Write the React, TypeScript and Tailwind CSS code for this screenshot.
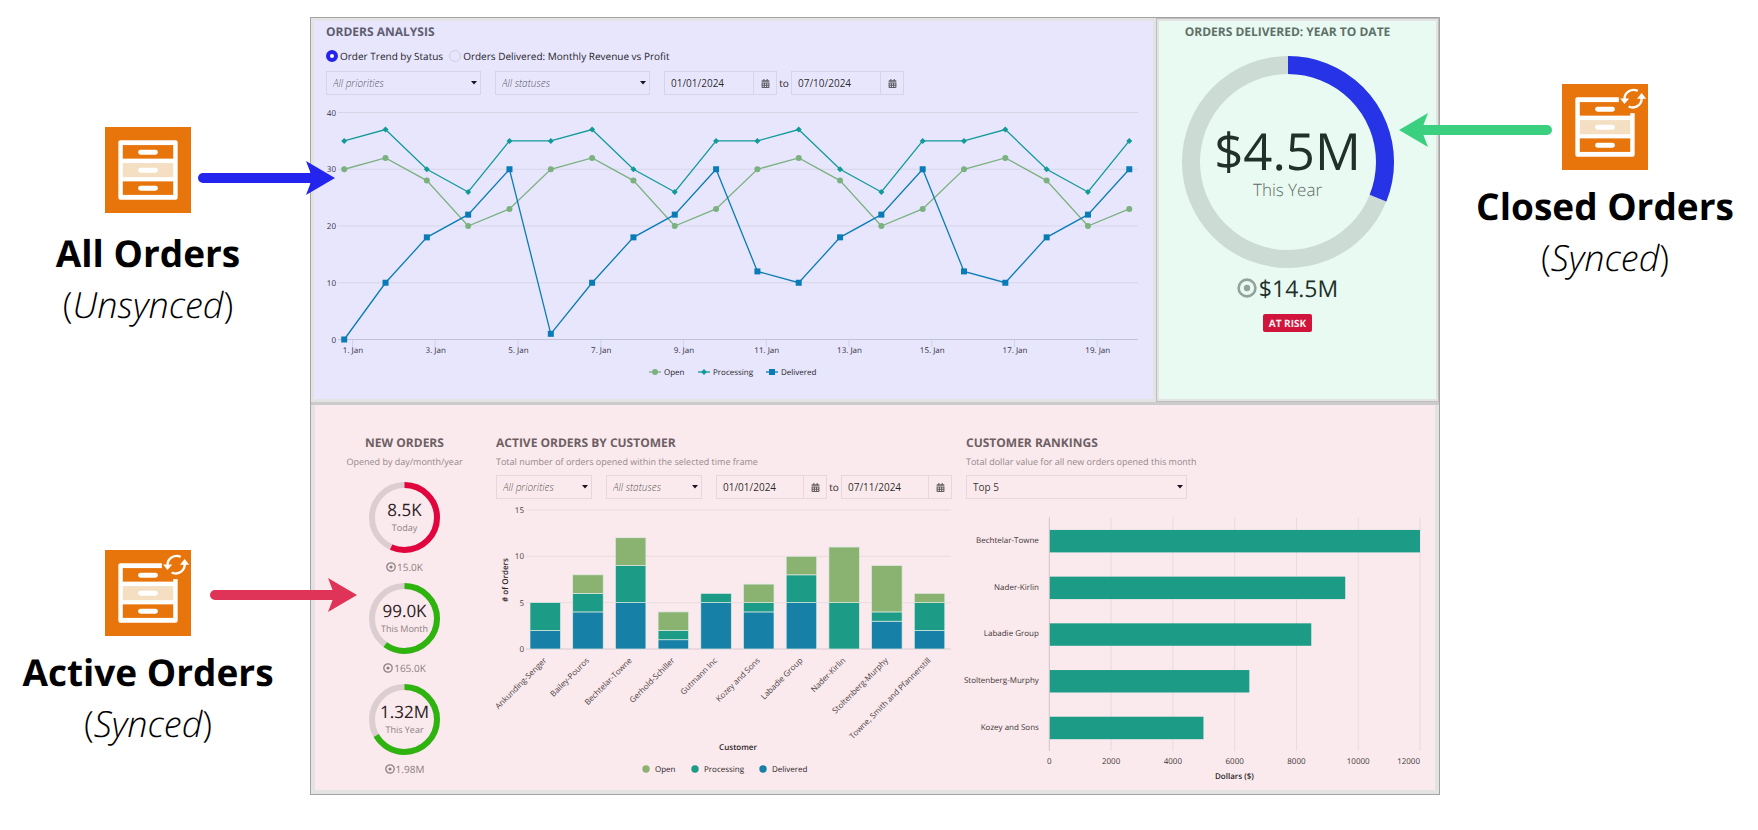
import { useId, useState } from 'react'
import type { ReactNode } from 'react'
import { FaCalendarAlt } from 'react-icons/fa'

const OPEN = '#7ab17f'
const PROCESSING = '#119a97'
const DELIVERED = '#0a7cb5'

const trend = {
  open: [30, 32, 28, 20, 23, 30, 32, 28, 20, 23, 30, 32, 28, 20, 23, 30, 32, 28, 20, 23],
  processing: [35, 37, 30, 26, 35, 35, 37, 30, 26, 35, 35, 37, 30, 26, 35, 35, 37, 30, 26, 35],
  delivered: [0, 10, 18, 22, 30, 1, 10, 18, 22, 30, 12, 10, 18, 22, 30, 12, 10, 18, 22, 30],
}

const customers = [
  { name: 'Ankunding-Senger', delivered: 2, processing: 3, open: 0 },
  { name: 'Bailey-Pouros', delivered: 4, processing: 2, open: 2 },
  { name: 'Bechtelar-Towne', delivered: 5, processing: 4, open: 3 },
  { name: 'Gerhold-Schiller', delivered: 1, processing: 1, open: 2 },
  { name: 'Gutmann Inc', delivered: 5, processing: 1, open: 0 },
  { name: 'Kozey and Sons', delivered: 4, processing: 1, open: 2 },
  { name: 'Labadie Group', delivered: 5, processing: 3, open: 2 },
  { name: 'Nader-Kirlin', delivered: 0, processing: 5, open: 6 },
  { name: 'Stoltenberg-Murphy', delivered: 3, processing: 1, open: 5 },
  { name: 'Towne, Smith and Pfannerstill', delivered: 2, processing: 3, open: 1 },
]

const rankings = [
  { name: 'Bechtelar-Towne', value: 12000 },
  { name: 'Nader-Kirlin', value: 9580 },
  { name: 'Labadie Group', value: 8480 },
  { name: 'Stoltenberg-Murphy', value: 6475 },
  { name: 'Kozey and Sons', value: 4990 },
]

const goals = [
  { value: '8.5K', label: 'Today', target: '15.0K', ratio: 8.5 / 15, color: '#e2043c' },
  { value: '99.0K', label: 'This Month', target: '165.0K', ratio: 99 / 165, color: '#2fb40f' },
  { value: '1.32M', label: 'This Year', target: '1.98M', ratio: 1.32 / 1.98, color: '#2fb40f' },
]

function CabinetIcon({ synced = false }: { synced?: boolean }) {
  return (
    <svg viewBox="0 0 87 87" className="size-[86px]" aria-hidden="true">
      <rect width="87" height="87" fill="#e8750b" />
      <rect x="13.5" y="13.5" width="60" height="60" rx="2" fill="#fff" />
      <rect x="18" y="18.3" width="51" height="13.7" fill="#e8750b" />
      <rect x="18" y="36.5" width="51" height="14.3" fill="#f4dfc3" />
      <rect x="18" y="55" width="51" height="13.7" fill="#e8750b" />
      <rect x="33.5" y="23" width="20" height="5" rx="2.5" fill="#fff" />
      <rect x="33.5" y="41.2" width="20" height="5" rx="2.5" fill="#fff" />
      <rect x="33.5" y="59.5" width="20" height="5" rx="2.5" fill="#fff" />
      {synced && (
        <>
          <rect x="57.5" y="0" width="29.5" height="29.5" fill="#e8750b" />
          <g fill="none" stroke="#fff" strokeWidth="2.4">
            <path d="M76.6 7A9.2 9.2 0 0 0 63.2 15.2" />
            <path d="M67.4 22.8A9.2 9.2 0 0 0 80.6 14" />
          </g>
          <path d="M58.8 14.6h9.2l-4.8 5.6zM75.8 15l4.8-5.8 4.6 5.8z" fill="#fff" />
        </>
      )}
    </svg>
  )
}

function Arrow({ length, color, className }: { length: number; color: string; className: string }) {
  return (
    <svg width={length} height="34" viewBox={`0 0 ${length} 34`} className={className} aria-hidden="true">
      <path d={`M5 17H${length - 20}`} stroke={color} strokeWidth="10" strokeLinecap="round" />
      <path d={`M${length} 17L${length - 29} 0L${length - 22.5} 17L${length - 29} 34Z`} fill={color} />
    </svg>
  )
}

function Source({ name, state, children }: { name: string; state: string; children: ReactNode }) {
  return (
    <div className="flex flex-col items-center gap-2.5 text-center whitespace-nowrap text-black">
      {children}
      <div className="leading-[52px]">
        <h2 className="text-[37px] font-bold">{name}</h2>
        <p className="text-[36px] font-light">
          (<em>{state}</em>)
        </p>
      </div>
    </div>
  )
}

function Select({ label, options, muted = false, className }: { label: string; options: string[]; muted?: boolean; className: string }) {
  return (
    <div className={`relative h-6 ${className}`}>
      <select
        aria-label={label}
        className={
          muted
            ? 'block h-full w-full appearance-none border border-black/8 pl-1.5 text-[10px] font-light italic text-black/70'
            : 'block h-full w-full appearance-none border border-black/8 pl-1.5 text-[10px] text-black/80'
        }
      >
        {options.map((o) => (
          <option key={o}>{o}</option>
        ))}
      </select>
      <svg viewBox="0 0 6 4" className="pointer-events-none absolute top-2.5 right-1 h-1 w-1.5" aria-hidden="true">
        <path d="M0 0h6L3 3.6z" fill="#1c1420" />
      </svg>
    </div>
  )
}

function DateField({ label, value, className }: { label: string; value: string; className: string }) {
  return (
    <div className={`flex h-6 border border-black/8 ${className}`}>
      <input
        type="text"
        aria-label={label}
        defaultValue={value}
        className="w-0 flex-1 border-r border-black/8 pl-1.5 text-[10px] text-black/85"
      />
      <button type="button" aria-label={`Pick ${label}`} className="flex w-[22px] items-center justify-center text-black/60">
        <FaCalendarAlt className="size-[9px]" />
      </button>
    </div>
  )
}

function TargetIcon({ className }: { className: string }) {
  return (
    <svg viewBox="0 0 20 20" className={className} aria-hidden="true">
      <circle cx="10" cy="10" r="8.4" fill="none" stroke="currentColor" strokeWidth="2.6" />
      <circle cx="10" cy="10" r="3.2" fill="currentColor" />
    </svg>
  )
}

function Ring({ size, width, ratio, color, track, className }: { size: number; width: number; ratio: number; color: string; track: string; className: string }) {
  const r = (size - width) / 2
  const len = 2 * Math.PI * r
  return (
    <svg viewBox={`0 0 ${size} ${size}`} className={className} aria-hidden="true">
      <g fill="none" strokeWidth={width} transform={`rotate(-90 ${size / 2} ${size / 2})`}>
        <circle cx={size / 2} cy={size / 2} r={r} stroke={track} />
        <circle cx={size / 2} cy={size / 2} r={r} stroke={color} strokeDasharray={`${len * ratio} ${len}`} />
      </g>
    </svg>
  )
}

function Marker({ kind, x, y }: { kind: string; x: number; y: number }) {
  if (kind === 'open') return <circle cx={x} cy={y} r="3" fill={OPEN} />
  if (kind === 'processing') return <path d={`M${x - 3} ${y}l3 -3l3 3l-3 3z`} fill={PROCESSING} />
  return <rect x={x - 3} y={y - 3} width="6" height="6" fill={DELIVERED} />
}

function TrendChart() {
  const px = (i: number) => 17.2 + i * 41.32
  const py = (v: number) => 240.5 - v * 5.675
  const series = [
    { key: 'open', color: OPEN, data: trend.open },
    { key: 'processing', color: PROCESSING, data: trend.processing },
    { key: 'delivered', color: DELIVERED, data: trend.delivered },
  ]
  const legend = [
    { key: 'open', label: 'Open', color: OPEN, x: 328 },
    { key: 'processing', label: 'Processing', color: PROCESSING, x: 377 },
    { key: 'delivered', label: 'Delivered', color: DELIVERED, x: 445 },
  ]
  return (
    <svg viewBox="-1 0 813 300" className="mt-1 w-full text-[8px]" role="img" aria-label="Order trend by status">
      {[0, 10, 20, 30, 40].map((v) => (
        <g key={v}>
          <path d={`M11 ${py(v)}H811`} stroke={v ? '#d6d5e8' : '#c2c2da'} />
          <text x="9" y={py(v) + 3} textAnchor="end" fill="#33313f">{v}</text>
        </g>
      ))}
      {[1, 3, 5, 7, 9, 11, 13, 15, 17, 19].map((day, i) => (
        <g key={day}>
          <path d={`M${25.5 + i * 82.75} 241v7`} stroke="#ccd3f3" />
          <text x={26 + i * 82.75} y="254" textAnchor="middle" fill="#33313f">{day}. Jan</text>
        </g>
      ))}
      {series.map((s) => (
        <g key={s.key}>
          <polyline points={s.data.map((v, i) => `${px(i)},${py(v)}`).join(' ')} fill="none" stroke={s.color} strokeWidth="1.3" />
          {s.data.map((v, i) => (
            <Marker key={i} kind={s.key} x={px(i)} y={py(v)} />
          ))}
        </g>
      ))}
      {legend.map((l) => (
        <g key={l.key}>
          <path d={`M${l.x - 6} 273h12`} stroke={l.color} strokeWidth="1.3" />
          <Marker kind={l.key} x={l.x} y={273} />
          <text x={l.x + 9} y="276" fill="#1f1d2a" className="font-medium">{l.label}</text>
        </g>
      ))}
    </svg>
  )
}

function CustomerChart() {
  const py = (v: number) => 146 - v * 9.27
  const legend = [
    { label: 'Open', color: '#8ab371', x: 150 },
    { label: 'Processing', color: '#1c9c87', x: 199 },
    { label: 'Delivered', color: '#1780a7', x: 267 },
  ]
  return (
    <svg viewBox="0 0 456 284" className="mt-1 w-full overflow-visible text-[8px]" role="img" aria-label="Active orders by customer">
      {[0, 5, 10, 15].map((v) => (
        <g key={v}>
          <path d={`M30 ${py(v)}H455`} stroke={v ? '#eadbde' : '#d8c9cf'} />
          <text x="28" y={py(v) + 3} textAnchor="end" fill="#4a4044">{v}</text>
        </g>
      ))}
      <text transform="translate(12 77) rotate(-90)" textAnchor="middle" fill="#2b2326" className="font-semibold"># of Orders</text>
      {customers.map((c, i) => {
        const x = 34 + i * 42.7
        const a = c.delivered
        const b = a + c.processing
        const t = b + c.open
        return (
          <g key={c.name}>
            <g stroke="#dfe9e4" strokeWidth="0.7">
              {a > 0 && <rect x={x} y={py(a)} width="30.5" height={py(0) - py(a)} fill="#1780a7" />}
              <rect x={x} y={py(b)} width="30.5" height={py(a) - py(b)} fill="#1c9c87" />
              {c.open > 0 && <rect x={x} y={py(t)} width="30.5" height={py(b) - py(t)} fill="#8ab371" />}
            </g>
            <text transform={`translate(${x + 17} 158) rotate(-45)`} textAnchor="end" fill="#4a4044">{c.name}</text>
          </g>
        )
      })}
      <text x="242" y="247" textAnchor="middle" fill="#2b2326" className="font-semibold">Customer</text>
      {legend.map((l) => (
        <g key={l.label}>
          <circle cx={l.x} cy="266" r="3.7" fill={l.color} />
          <text x={l.x + 9} y="269" fill="#2b2326" className="font-medium">{l.label}</text>
        </g>
      ))}
    </svg>
  )
}

function RankingChart() {
  const px = (v: number) => 83.5 + (v / 12000) * 371.5
  return (
    <svg viewBox="0 0 456 284" className="mt-1 w-full overflow-visible text-[8px]" role="img" aria-label="Customer rankings">
      {[0, 2000, 4000, 6000, 8000, 10000, 12000].map((v) => (
        <g key={v}>
          <path d={`M${px(v)} 14.5V248.5`} stroke={v ? '#e8dade' : '#d0c2c7'} />
          <text x={px(v)} y="262" textAnchor={v === 12000 ? 'end' : 'middle'} fill="#3d3437">{v}</text>
        </g>
      ))}
      {rankings.map((r, i) => (
        <g key={r.name}>
          <rect x="84" y={27 + i * 46.8} width={px(r.value) - 84} height="22.5" fill="#1c9c87" />
          <text x="73" y={40 + i * 46.8} textAnchor="end" fill="#3d3437">{r.name}</text>
        </g>
      ))}
      <text x="269" y="277" textAnchor="middle" fill="#2b2326" className="font-semibold">Dollars ($)</text>
    </svg>
  )
}

function OrdersAnalysis() {
  const group = useId()
  const [view, setView] = useState('trend')
  const views = [
    { id: 'trend', label: 'Order Trend by Status' },
    { id: 'revenue', label: 'Orders Delivered: Monthly Revenue vs Profit' },
  ]
  return (
    <section className="border-3 border-[#e3e3e3] bg-[#e8e6fc] pt-[3px] pr-3.5 pl-3">
      <h3 className="text-xs font-bold text-[#5f5d70]">ORDERS ANALYSIS</h3>
      <div className="mt-2 flex h-4 items-center gap-1.5">
        {views.map((v) => (
          <label key={v.id} className="flex items-center gap-0.5 text-[10px] text-[#1f1d2a]">
            <input
              type="radio"
              name={group}
              checked={view === v.id}
              onChange={() => setView(v.id)}
              className="size-3 appearance-none rounded-full border border-[#cfcee4] checked:border-[4px] checked:border-[#2424ef] checked:bg-white"
            />
            {v.label}
          </label>
        ))}
      </div>
      <div className="mt-[7px] flex items-center">
        <Select label="Priority" options={['All priorities']} muted className="w-[155px]" />
        <Select label="Status" options={['All statuses']} muted className="ml-3.5 w-[155px]" />
        <DateField label="start date" value="01/01/2024" className="ml-3.5 w-[113px]" />
        <span className="w-3.5 text-center text-[10px] text-[#1f1d2a]">to</span>
        <DateField label="end date" value="07/10/2024" className="w-[113px]" />
      </div>
      <TrendChart />
    </section>
  )
}

function OrdersDelivered() {
  return (
    <section className="flex flex-col items-center border-3 border-[#e3e3e3] bg-[#e9faf2] pt-[3px] pr-5 outline -outline-offset-1 outline-[#bdbdbd]">
      <h3 className="text-xs font-bold text-[#5f7069]">ORDERS DELIVERED: YEAR TO DATE</h3>
      <div className="relative mt-4 size-[212px]">
        <Ring size={212} width={18} ratio={4.5 / 14.5} color="#2633e6" track="#ccdbd4" className="size-full" />
        <div className="absolute inset-0 flex flex-col items-center justify-center">
          <span className="text-[51px] leading-[56px] text-[#22302a]">$4.5M</span>
          <span className="text-[17px] leading-6 font-light text-[#5c6a63]">This Year</span>
        </div>
      </div>
      <div className="mt-1 flex items-center gap-0.5 text-[#22302a]">
        <TargetIcon className="size-5 text-[#93a39b]" />
        <span className="text-[23px] leading-8">$14.5M</span>
      </div>
      <span className="mt-2.5 rounded-xs bg-[#d0143c] px-1.5 text-[10px] leading-[18px] font-bold text-[#fdeef0]">AT RISK</span>
    </section>
  )
}

function ActiveOrders() {
  return (
    <section className="grid grid-cols-[155px_1fr_1fr] gap-3.5 border-4 border-t-0 border-[#e3e3e3] bg-[#faeaed] pt-[30px] pr-3.5 pb-[3px] pl-3">
      <div className="flex flex-col items-center">
        <h3 className="text-xs font-bold text-[#6e5f64]">NEW ORDERS</h3>
        <p className="mt-1 text-[9px] leading-[14px] text-[#96888c]">Opened by day/month/year</p>
        <div className="mt-[13px] flex flex-col gap-2">
          {goals.map((g) => (
            <div key={g.label} className="flex flex-col items-center">
              <div className="relative size-[71px]">
                <Ring size={71} width={6} ratio={g.ratio} color={g.color} track="#dccdd1" className="size-full" />
                <div className="absolute inset-0 flex flex-col items-center justify-center">
                  <span className="text-[17px] leading-5 text-[#2b2024]">{g.value}</span>
                  <span className="text-[9px] leading-4 text-[#8d7f83]">{g.label}</span>
                </div>
              </div>
              <div className="mt-1.5 flex h-4 items-center gap-px text-[10px] text-[#8d7f83]">
                <TargetIcon className="size-2.5" />
                {g.target}
              </div>
            </div>
          ))}
        </div>
      </div>

      <div>
        <h3 className="text-xs font-bold text-[#6e5f64]">ACTIVE ORDERS BY CUSTOMER</h3>
        <p className="mt-1 text-[9px] leading-[14px] text-[#96888c]">Total number of orders opened within the selected time frame</p>
        <div className="mt-1.5 flex items-center">
          <Select label="Priority" options={['All priorities']} muted className="w-24" />
          <Select label="Status" options={['All statuses']} muted className="ml-3.5 w-24" />
          <DateField label="start date" value="01/01/2024" className="ml-3.5 w-[111px]" />
          <span className="w-3.5 text-center text-[10px] text-[#2b2326]">to</span>
          <DateField label="end date" value="07/11/2024" className="w-[111px]" />
        </div>
        <CustomerChart />
      </div>

      <div>
        <h3 className="text-xs font-bold text-[#6e5f64]">CUSTOMER RANKINGS</h3>
        <p className="mt-1 mb-1.5 text-[9px] leading-[14px] text-[#96888c]">Total dollar value for all new orders opened this month</p>
        <Select label="Ranking size" options={['Top 5', 'Top 10']} className="w-[221px]" />
        <RankingChart />
      </div>
    </section>
  )
}

export default function App() {
  return (
    <div className="grid min-h-screen grid-cols-[310px_1fr_318px] bg-white font-['Open_Sans',sans-serif] [text-rendering:geometricPrecision]">
      <aside className="pt-[127px] pr-3.5">
        <Source name="All Orders" state="Unsynced">
          <div className="relative pb-1">
            <CabinetIcon />
            <Arrow length={137} color="#2424ef" className="absolute top-[34px] left-[93px] z-10" />
          </div>
        </Source>
        <div className="mt-[219px]">
          <Source name="Active Orders" state="Synced">
            <div className="relative">
              <CabinetIcon synced />
              <Arrow length={147} color="#df3357" className="absolute top-[28px] left-[105px] z-10" />
            </div>
          </Source>
        </div>
      </aside>

      <main className="mt-[17px] self-start border border-[#a3a3a3]">
        <div className="grid grid-cols-[1fr_283px] border-b-3 border-[#cbcbcb]">
          <OrdersAnalysis />
          <OrdersDelivered />
        </div>
        <ActiveOrders />
      </main>

      <aside className="pt-[84px] pl-3">
        <Source name="Closed Orders" state="Synced">
          <div className="relative">
            <CabinetIcon synced />
            <Arrow length={153} color="#3ad080" className="absolute top-[29px] right-[96px] z-10 rotate-180" />
          </div>
        </Source>
      </aside>
    </div>
  )
}
